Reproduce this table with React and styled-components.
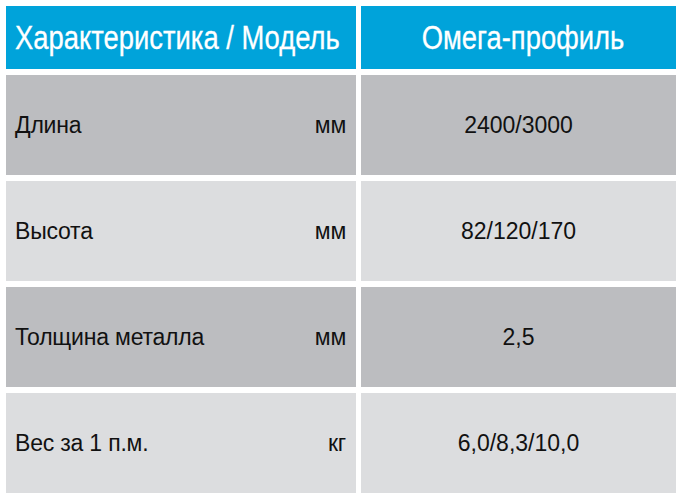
import React from "react";
import styled, { createGlobalStyle } from "styled-components";

const Global = createGlobalStyle`
  html, body { margin: 0; padding: 0; background: #ffffff; }
  body { font-family: "Liberation Sans", Arial, sans-serif; }
`;

const Table = styled.div`
  display: grid;
  grid-template-columns: 350px 315px;
  grid-template-rows: 63px repeat(4, 100px);
  column-gap: 5px;
  row-gap: 6px;
  padding: 6px 0 0 6px;
  width: 682px;
  height: 500px;
  box-sizing: border-box;
`;

const HeadCell = styled.div`
  background: #00a3da;
  color: #ffffff;
  display: flex;
  align-items: center;
  justify-content: ${(p) => (p.$center ? "center" : "flex-start")};
  padding: 1px 0 0 9px;
  box-sizing: border-box;
  font-family: "Liberation Sans", Arial, sans-serif;
  font-size: 33px;
  white-space: nowrap;
  overflow: hidden;
`;

const Narrow = styled.span`
  display: inline-block;
  transform: scaleX(0.83);
  transform-origin: ${(p) => (p.$center ? "center" : "left")} center;
  -webkit-text-stroke: 0.3px #ffffff;
`;

const LabelCell = styled.div`
  background: ${(p) => (p.$dark ? "#bcbdc0" : "#dcdddf")};
  color: #111111;
  display: flex;
  align-items: center;
  justify-content: space-between;
  padding: 0 10px 0 9px;
  font-size: 23px;
  letter-spacing: -0.2px;
`;

const ValueCell = styled.div`
  background: ${(p) => (p.$dark ? "#bcbdc0" : "#dcdddf")};
  color: #111111;
  display: flex;
  align-items: center;
  justify-content: center;
  font-size: 23px;
`;

const rows = [
  { name: "Длина", unit: "мм", value: "2400/3000" },
  { name: "Высота", unit: "мм", value: "82/120/170" },
  { name: "Толщина металла", unit: "мм", value: "2,5" },
  { name: "Вес за 1 п.м.", unit: "кг", value: "6,0/8,3/10,0" },
];

export default function App() {
  return (
    <>
      <Global />
      <Table>
        <HeadCell>
          <Narrow>Характеристика / Модель</Narrow>
        </HeadCell>
        <HeadCell $center>
          <Narrow $center>Омега-профиль</Narrow>
        </HeadCell>
        {rows.map((r, i) => (
          <React.Fragment key={r.name}>
            <LabelCell $dark={i % 2 === 0}>
              <span>{r.name}</span>
              <span>{r.unit}</span>
            </LabelCell>
            <ValueCell $dark={i % 2 === 0}>{r.value}</ValueCell>
          </React.Fragment>
        ))}
      </Table>
    </>
  );
}
